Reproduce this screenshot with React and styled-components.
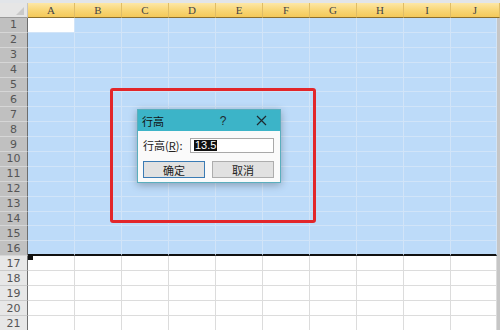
import styled, { createGlobalStyle } from "styled-components";

const COLS = ["A", "B", "C", "D", "E", "F", "G", "H", "I", "J"];
const ROWS = Array.from({ length: 21 }, (_, i) => i + 1);
const SELECTED_LAST = 16;

export default function App() {
  return (
    <Sheet>
      <GlobalStyle />
      <TopStrip />
      <HeaderRow>
        <Corner />
        {COLS.map((c) => (
          <ColHeader key={c} $last={c === "J"}>
            {c}
          </ColHeader>
        ))}
      </HeaderRow>

      {ROWS.map((r) => {
        const sel = r <= SELECTED_LAST;
        return (
          <Row key={r} $sel={sel}>
            <RowHeader $sel={sel}>{r}</RowHeader>
            {COLS.map((c) => (
              <Cell
                key={c}
                $sel={sel}
                $active={r === 1 && c === "A"}
                $edge={r === SELECTED_LAST}
                $last={c === "J"}
              />
            ))}
            <Edge />
          </Row>
        );
      })}

      <FillHandle />

      <Annotation />

      <Dialog>
        <TitleBar>
          <Title>行高</Title>
          <TitleButton>?</TitleButton>
          <TitleButton>
            <svg width="11" height="11" viewBox="0 0 11 11">
              <path d="M1 1 L10 10 M10 1 L1 10" stroke="#1e2a30" strokeWidth="1.2" />
            </svg>
          </TitleButton>
        </TitleBar>
        <Body>
          <Field>
            <Label>
              行高(<u>R</u>):
            </Label>
            <Input>
              <Selected>13.5</Selected>
            </Input>
          </Field>
          <Buttons>
            <Button $primary>确定</Button>
            <Button>取消</Button>
          </Buttons>
        </Body>
      </Dialog>
    </Sheet>
  );
}

const GlobalStyle = createGlobalStyle`
  body {
    margin: 0;
    overflow: hidden;
    background: #fff;
    font-family: "Liberation Sans", "Noto Sans CJK SC", sans-serif;
  }
`;

const Sheet = styled.div`
  position: relative;
  width: 500px;
  height: 330px;
  overflow: hidden;
  background: #fff;
`;

const TopStrip = styled.div`
  height: 3px;
  background: #e2e5e9;
`;

const HeaderRow = styled.div`
  display: flex;
  height: 15px;
`;

const Corner = styled.div`
  position: relative;
  flex: 0 0 28px;
  box-sizing: border-box;
  background: #e6e6e6;
  border-right: 1px solid #c4c4c4;
  border-bottom: 1px solid #9a9a9a;

  &::after {
    content: "";
    position: absolute;
    right: 3px;
    bottom: 2px;
    border-left: 8px solid transparent;
    border-bottom: 8px solid #c9c9c9;
  }
`;

const ColHeader = styled.div`
  flex: 0 0 ${(p) => (p.$last ? "49px" : "47px")};
  box-sizing: border-box;
  display: flex;
  align-items: center;
  justify-content: center;
  background: linear-gradient(#fde7a6, #f8d574 55%, #f4c95a);
  border-right: 1px solid #e0bd66;
  border-bottom: 1px solid #8c6f2c;
  font-family: "Liberation Serif", serif;
  font-size: 11px;
  color: #454545;
`;

const Row = styled.div`
  display: flex;
  height: ${(p) => (p.$sel ? "14.9px" : "15px")};
`;

const RowHeader = styled.div`
  flex: 0 0 28px;
  box-sizing: border-box;
  display: flex;
  align-items: center;
  justify-content: center;
  background: ${(p) => (p.$sel ? "#c0c0c0" : "#e7e7e7")};
  border-right: 1px solid #6e6e6e;
  border-bottom: 1px solid ${(p) => (p.$sel ? "#d6d6d6" : "#cbcbcb")};
  font-family: "DejaVu Sans", sans-serif;
  font-size: 11px;
  color: #555;
`;

const Cell = styled.div`
  flex: 0 0 ${(p) => (p.$last ? "46px" : "47px")};
  box-sizing: border-box;
  background: ${(p) => (p.$active ? "#fff" : p.$sel ? "#bddbf9" : "#fff")};
  border-right: 1px solid ${(p) => (p.$sel ? "#d1e4f8" : "#dcdcdc")};
  border-bottom: ${(p) =>
    p.$edge
      ? "2px solid #111"
      : `1px solid ${p.$sel ? "#d1e4f8" : "#dcdcdc"}`};
`;

const Edge = styled.div`
  flex: 0 0 3px;
  background: #c6c6c6;
`;

const FillHandle = styled.div`
  position: absolute;
  left: 28px;
  top: 255px;
  width: 5px;
  height: 5px;
  background: #111;
`;

const Annotation = styled.div`
  position: absolute;
  left: 110px;
  top: 88px;
  width: 206px;
  height: 135px;
  box-sizing: border-box;
  border: 3px solid #e2262a;
  border-radius: 3px;
`;

const Dialog = styled.div`
  position: absolute;
  left: 137px;
  top: 109px;
  width: 144px;
  height: 74px;
  box-sizing: border-box;
  border: 1px solid #5aaebd;
  background: #fafafa;
  box-shadow: 0 2px 8px rgba(0, 0, 0, 0.28);
  display: flex;
  flex-direction: column;
`;

const TitleBar = styled.div`
  display: flex;
  align-items: center;
  height: 21px;
  padding: 0 0 0 4px;
  background: #3cb4c8;
`;

const Title = styled.div`
  flex: 1;
  font-family: "Noto Sans CJK SC", sans-serif;
  font-size: 11px;
  color: #111;
`;

const TitleButton = styled.div`
  width: 38px;
  display: flex;
  justify-content: center;
  font-family: "Liberation Sans", sans-serif;
  font-size: 12px;
  color: #1e2a30;
`;

const Body = styled.div`
  flex: 1;
  display: flex;
  flex-direction: column;
  gap: 8px;
  padding: 6px 6px 0 5px;
`;

const Field = styled.div`
  display: flex;
  align-items: center;
  justify-content: space-between;
`;

const Label = styled.span`
  font-family: "Noto Sans CJK SC", sans-serif;
  font-size: 11px;
  color: #222;

  u {
    text-decoration-thickness: 1px;
  }
`;

const Input = styled.div`
  width: 84px;
  height: 15px;
  box-sizing: border-box;
  display: flex;
  align-items: center;
  padding-left: 3px;
  background: #fff;
  border: 1px solid #a9a9a9;
`;

const Selected = styled.span`
  background: #111;
  color: #fff;
  font-family: "Liberation Sans", sans-serif;
  font-size: 11px;
  line-height: 11px;
  padding: 0 1px;
`;

const Buttons = styled.div`
  display: flex;
  justify-content: space-between;
`;

const Button = styled.div`
  width: 62px;
  height: 17px;
  box-sizing: border-box;
  display: flex;
  align-items: center;
  justify-content: center;
  background: #e1e1e1;
  border: 1px solid ${(p) => (p.$primary ? "#3b7bb4" : "#adadad")};
  font-family: "Noto Sans CJK SC", sans-serif;
  font-size: 11px;
  color: #222;
`;
